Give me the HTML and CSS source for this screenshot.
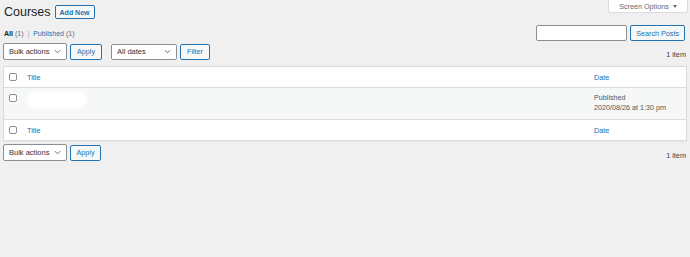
FILE: index.html
```html
<!DOCTYPE html>
<html>
<head>
<meta charset="utf-8">
<link rel="stylesheet" href="styles.css">
</head>
<body>
<div class="wrap">
  <div class="top">
    <div class="title-row">
      <h1>Courses</h1>
      <a class="page-action">Add New</a>
    </div>
    <div class="screen-options">Screen Options <span class="tri"></span></div>
  </div>
  <div class="subnav">
    <div class="subsub"><b class="current">All</b> <span class="count">(1)</span> <span class="sep">|</span> <a class="link">Published</a> <span class="count">(1)</span></div>
    <div class="search">
      <div class="input"></div>
      <a class="btn">Search Posts</a>
    </div>
  </div>
  <div class="tablenav">
    <div class="actions">
      <div class="select w-bulk">Bulk actions <svg class="chev" viewBox="0 0 8 5"><path d="M1 1l3 3 3-3" fill="none" stroke="#50575e" stroke-width="1"/></svg></div>
      <a class="btn w-apply">Apply</a>
      <div class="select w-dates">All dates <svg class="chev" viewBox="0 0 8 5"><path d="M1 1l3 3 3-3" fill="none" stroke="#50575e" stroke-width="1"/></svg></div>
      <a class="btn w-filter">Filter</a>
    </div>
    <div class="num">1 item</div>
  </div>
  <div class="table">
    <div class="row head">
      <div class="cb"><span class="box"></span></div>
      <div class="c-title"><a class="link">Title</a></div>
      <div class="c-date"><a class="link">Date</a></div>
    </div>
    <div class="row body">
      <div class="cb"><span class="box"></span></div>
      <div class="c-title"><span class="blob"></span></div>
      <div class="c-date">Published<br>2020/08/26 at 1:30 pm</div>
    </div>
    <div class="row foot">
      <div class="cb"><span class="box"></span></div>
      <div class="c-title"><a class="link">Title</a></div>
      <div class="c-date"><a class="link">Date</a></div>
    </div>
  </div>
  <div class="tablenav bottom">
    <div class="actions">
      <div class="select w-bulk">Bulk actions <svg class="chev" viewBox="0 0 8 5"><path d="M1 1l3 3 3-3" fill="none" stroke="#50575e" stroke-width="1"/></svg></div>
      <a class="btn w-apply2">Apply</a>
    </div>
    <div class="num">1 item</div>
  </div>
</div>
</body>
</html>
```
FILE: styles.css
```css
html, body {
  margin: 0;
  background: #f0f0f1;
}
body {
  font-family: "Liberation Sans", Arial, sans-serif;
  font-size: 7.5px;
  color: #3c434a;
}
.wrap {
  padding: 0 3px;
}
.top {
  display: flex;
  justify-content: space-between;
  align-items: flex-start;
  height: 20px;
}
.title-row {
  display: flex;
  align-items: center;
  gap: 4px;
  padding: 5px 0 0 1px;
}
h1 {
  margin: 0;
  font-size: 12.5px;
  font-weight: 400;
  line-height: 14px;
  color: #1d2327;
}
.page-action {
  box-sizing: border-box;
  height: 14px;
  padding: 0 4px;
  display: flex;
  align-items: center;
  border: 1px solid #2271b1;
  border-radius: 2px;
  background: #f6f7f7;
  color: #2271b1;
  font-size: 7px;
  font-weight: 700;
}
.screen-options {
  box-sizing: border-box;
  width: 80px;
  height: 13px;
  margin-right: -1px;
  display: flex;
  align-items: center;
  justify-content: center;
  gap: 4px;
  background: #fff;
  border: 1px solid #dcdcde;
  border-top: none;
  border-radius: 0 0 3px 3px;
  color: #646970;
  font-size: 7.2px;
}
.tri {
  width: 0;
  height: 0;
  border-left: 2.5px solid transparent;
  border-right: 2.5px solid transparent;
  border-top: 3px solid #646970;
}
.subnav {
  display: flex;
  justify-content: space-between;
  align-items: center;
  height: 16px;
  margin-top: 5px;
}
.subsub {
  padding-left: 1px;
  font-size: 7px;
  color: #646970;
}
.current {
  color: #1d2327;
  font-weight: 700;
}
.sep {
  color: #a7aaad;
  padding: 0 2px;
}
.link {
  color: #2271b1;
}
.search {
  display: flex;
  gap: 3px;
  margin-right: 2px;
}
.input {
  box-sizing: border-box;
  width: 91px;
  height: 16px;
  background: #fff;
  border: 1px solid #8c8f94;
  border-radius: 2px;
}
.btn {
  box-sizing: border-box;
  height: 16px;
  display: flex;
  align-items: center;
  justify-content: center;
  padding: 0 5px;
  border: 1px solid #2271b1;
  border-radius: 2px;
  background: #f6f7f7;
  color: #2271b1;
  font-size: 7.2px;
}
.tablenav {
  display: flex;
  justify-content: space-between;
  height: 17px;
  margin-top: 2px;
}
.actions {
  display: flex;
  align-items: center;
  gap: 3px;
}
.select {
  box-sizing: border-box;
  height: 17px;
  display: flex;
  align-items: center;
  justify-content: space-between;
  padding: 0 5px 0 5px;
  background: #fff;
  border: 1px solid #8c8f94;
  border-radius: 2px;
  color: #2c3338;
  font-size: 7.5px;
}
.chev {
  width: 7px;
  height: 5px;
}
.w-bulk { width: 64px; }
.w-dates { width: 66px; margin-left: 6px; height: 16px; }
.w-apply { width: 32px; }
.w-apply2 { width: 31px; }
.w-filter { width: 30px; }
.num {
  align-self: flex-end;
  line-height: 8px;
  margin-bottom: 1px;
  margin-right: 1px;
  color: #3c434a;
  font-size: 7.3px;
}
.table {
  margin-top: 6px;
  background: #fff;
  border: 1px solid #dcdcde;
  box-shadow: 0 1px 1px rgba(0,0,0,0.03);
}
.row {
  display: grid;
  grid-template-columns: 23px 1fr 92px;
}
.head {
  height: 20px;
  align-items: center;
  border-bottom: 1px solid #dcdcde;
}
.body {
  height: 31px;
  background: #f6f7f7;
  align-items: start;
  padding-top: 5px;
  box-sizing: border-box;
}
.foot {
  height: 20px;
  align-items: center;
  border-top: 1px solid #dcdcde;
}
.cb {
  display: flex;
  padding-left: 5px;
}
.box {
  box-sizing: border-box;
  width: 8px;
  height: 8px;
  background: #fff;
  border: 1px solid #8c8f94;
  border-radius: 2px;
}
.body .box {
  margin-top: 1px;
}
.c-title, .c-date {
  font-size: 7.3px;
}
.body .c-date {
  font-size: 7.2px;
  line-height: 10px;
  color: #50575e;
}
.blob {
  display: block;
  width: 60px;
  height: 16px;
  margin-top: -1px;
  background: #fff;
  border-radius: 8px;
  filter: blur(1.5px);
}
.tablenav.bottom {
  margin-top: 3px;
}
```
